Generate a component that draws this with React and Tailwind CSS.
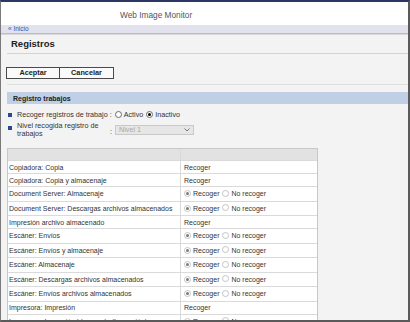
import React from "react";

const Radio = ({ checked, muted }) => (
  <span
    className={
      "inline-flex items-center justify-center w-[7px] h-[7px] rounded-full border bg-white shrink-0 " +
      (muted ? "border-[#c4c4c4]" : "border-[#6a6a6a]")
    }
  >
    {checked && (
      <span className={"w-[3px] h-[3px] rounded-full " + (muted ? "bg-[#7a7a7a]" : "bg-black")} />
    )}
  </span>
);

const rows = [
  ["Copiadora: Copia", "text"],
  ["Copiadora: Copia y almacenaje", "text"],
  ["Document Server: Almacenaje", "radio"],
  ["Document Server: Descargas archivos almacenados", "radio"],
  ["Impresión archivo almacenado", "text"],
  ["Escáner: Envíos", "radio"],
  ["Escáner: Envíos y almacenaje", "radio"],
  ["Escáner: Almacenaje", "radio"],
  ["Escáner: Descargas archivos almacenados", "radio"],
  ["Escáner: Envíos archivos almacenados", "radio"],
  ["Impresora: Impresión", "text"],
  ["Impresora: Impresión bloqueada (Impresión)", "radio"],
];

export default function App() {
  return (
    <div
      className="w-[410px] h-[322px] overflow-hidden bg-[#f3f3f3] border-l border-l-[#7a7a7a] border-t-2 border-t-[#2c3763] border-r-2 border-r-[#5a5a5a] border-b-2 border-b-[#5a5a5a] text-[#333]"
      style={{ fontFamily: '"Liberation Sans", Arial, sans-serif' }}
    >
      {/* header */}
      <div className="h-[23px] bg-white flex items-center">
        <span className="ml-[119px] text-[8.3px] text-[#555] leading-none mt-[4px]">Web Image Monitor</span>
      </div>
      {/* breadcrumb */}
      <div className="h-[8px] bg-[#e2e2ee] flex items-center">
        <span className="ml-[7px] text-[6.5px] leading-none text-[#3853a4]">« Inicio</span>
      </div>
      <div className="h-px bg-[#bdbdbd]" />
      <div className="h-px bg-[#d9d9d9]" />

      {/* title */}
      <div className="mt-[3px] ml-[10px] h-[12px] leading-[12px] text-[9.5px] font-bold text-[#222]">Registros</div>
      <div className="mt-[3px] ml-[6px] h-px bg-[#d2d2d2]" />

      {/* buttons */}
      <div className="mt-[13px] ml-[5px] flex">
        <div className="w-[54px] h-[12px] border border-[#4a4a4a] bg-[#fafafa] flex items-center justify-center text-[7.3px] font-bold text-[#222] leading-none">
          Aceptar
        </div>
        <div className="w-[54px] h-[12px] border border-l-0 border-[#4a4a4a] bg-[#fafafa] flex items-center justify-center text-[7.3px] font-bold text-[#222] leading-none">
          Cancelar
        </div>
      </div>
      <div className="mt-[5px] ml-[6px] h-px bg-[#dedede]" />

      {/* section */}
      <div className="mt-[7px] ml-[6px] h-[12px] bg-[#bfd0e6] flex items-center">
        <span className="ml-[6px] text-[7px] font-bold text-[#222] leading-none">Registro trabajos</span>
      </div>

      {/* option 1 */}
      <div className="mt-[7px] ml-[7px] flex items-center h-[8px] text-[7.2px] leading-none">
        <span className="w-[4px] h-[4px] bg-[#2b4a8c] mr-[5px]" />
        <span>Recoger registros de trabajo :</span>
        <span className="ml-[3px] flex items-center gap-[1px]">
          <Radio />
          <span className="ml-[1px]">Activo</span>
        </span>
        <span className="ml-[3px] flex items-center gap-[1px]">
          <Radio checked />
          <span className="ml-[1px]">Inactivo</span>
        </span>
      </div>

      {/* option 2 */}
      <div className="mt-[2px] ml-[7px] flex items-start text-[7.2px]">
        <span className="w-[4px] h-[4px] bg-[#2b4a8c] mr-[5px] mt-[5px]" />
        <span className="w-[90px] leading-[8px] mt-[1px]">
          Nivel recogida registro de
          <br />
          trabajos
        </span>
        <span className="ml-[3px] mt-[7px] leading-none">:</span>
        <div className="ml-[3px] mt-[4px] w-[79px] h-[10px] bg-[#e6e6e6] border border-[#c9c9c9] flex items-center justify-between px-[3px]">
          <span className="text-[#a8a8a8] leading-none">Nivel 1</span>
          <svg width="6" height="4" viewBox="0 0 6 4">
            <path d="M0.5 0.5 L3 3 L5.5 0.5" fill="none" stroke="#777" strokeWidth="1" />
          </svg>
        </div>
      </div>

      {/* table */}
      <div className="mt-[10px] ml-[6px] w-[311px] bg-[#dadada] border border-[#c8c8c8] flex flex-col gap-px">
        <div className="flex gap-px h-[11px]">
          <div className="w-[172px] bg-[#e2e2e2]" />
          <div className="flex-1 bg-[#e2e2e2]" />
        </div>
        {rows.map(([label, kind], i) => (
          <div key={i} className={"flex gap-px text-[7px] leading-none " + (kind === "radio" ? "h-[13.5px]" : "h-[12px]")}>
            <div className="w-[172px] bg-white flex items-center pl-[1px] whitespace-nowrap overflow-hidden">{label}</div>
            <div className="flex-1 bg-white flex items-center pl-[3px] whitespace-nowrap">
              {kind === "text" ? (
                <span>Recoger</span>
              ) : (
                <>
                  <Radio checked muted />
                  <span className="ml-[2px]">Recoger</span>
                  <span className="ml-[3px]">
                    <Radio muted />
                  </span>
                  <span className="ml-[2px]">No recoger</span>
                </>
              )}
            </div>
          </div>
        ))}
      </div>
    </div>
  );
}
